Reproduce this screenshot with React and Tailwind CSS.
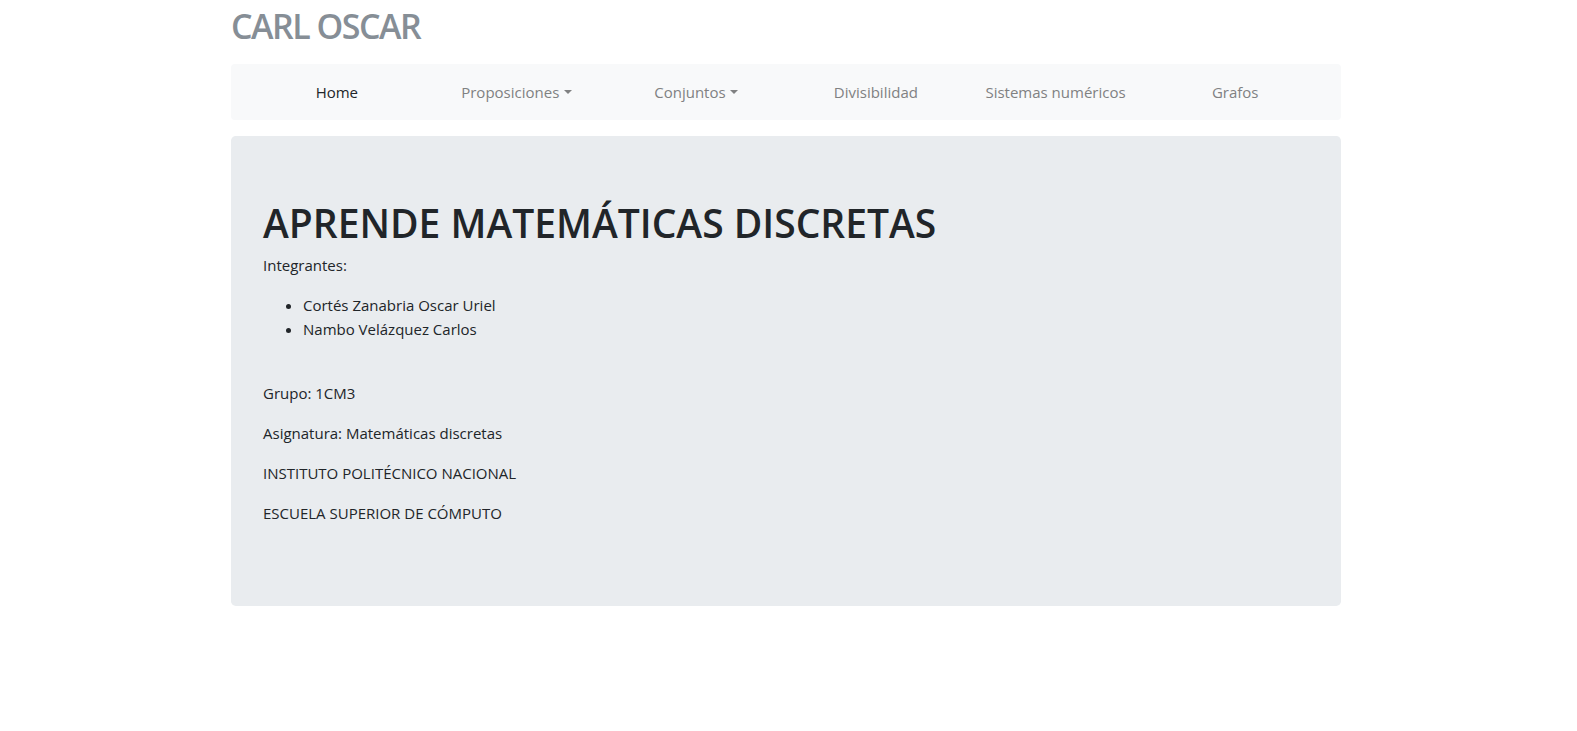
import React from "react";

const links = [
  { label: "Home", active: true },
  { label: "Proposiciones", dropdown: true },
  { label: "Conjuntos", dropdown: true },
  { label: "Divisibilidad" },
  { label: "Sistemas numéricos" },
  { label: "Grafos" },
];

function NavBar() {
  return (
    <nav className="flex items-center px-4 py-2 bg-[#f8f9fa] rounded">
      <ul className="flex w-full">
        {links.map((link) => (
          <li key={link.label} className="flex-1 text-center">
            <a
              href="#"
              className={`inline-block py-2 leading-6 ${link.active ? "text-[#212529]" : "text-[#808182]"}`}
            >
              {link.label}
              {link.dropdown && (
                <span className="inline-block ml-[0.3em] align-[0.255em] border-t-[0.33em] border-x-[0.33em] border-x-transparent border-t-[#808182]"></span>
              )}
            </a>
          </li>
        ))}
      </ul>
    </nav>
  );
}

export default function App() {
  return (
    <div className="min-h-screen bg-white pr-[5px] font-['Open_Sans',sans-serif] text-[15px] text-[#212529]">
      <div className="w-[1110px] mx-auto">
        <div className="h-[64px] pt-[6px]">
          <h1 className="text-[34px] leading-[1.2] font-semibold tracking-[-1.5px] text-[#868e96]">CARL OSCAR</h1>
        </div>
        <NavBar />
        <div className="mt-4 px-8 py-16 bg-[#e9ecef] rounded-[0.3rem]">
          <h1 className="text-[39px] leading-[1.2] font-semibold mb-2">APRENDE MATEMÁTICAS DISCRETAS</h1>
          <p className="leading-6 mb-4 -mt-[2px]">Integrantes:</p>
          <ul className="list-disc pl-10 leading-6 mb-[18px]">
            <li>Cortés Zanabria Oscar Uriel</li>
            <li>Nambo Velázquez Carlos</li>
          </ul>
          <br />
          <p className="leading-6 mb-4">Grupo: 1CM3</p>
          <p className="leading-6 mb-4">Asignatura: Matemáticas discretas</p>
          <p className="leading-6 mb-4">INSTITUTO POLITÉCNICO NACIONAL</p>
          <p className="leading-6 mb-[17px]">ESCUELA SUPERIOR DE CÓMPUTO</p>
        </div>
      </div>
    </div>
  );
}
